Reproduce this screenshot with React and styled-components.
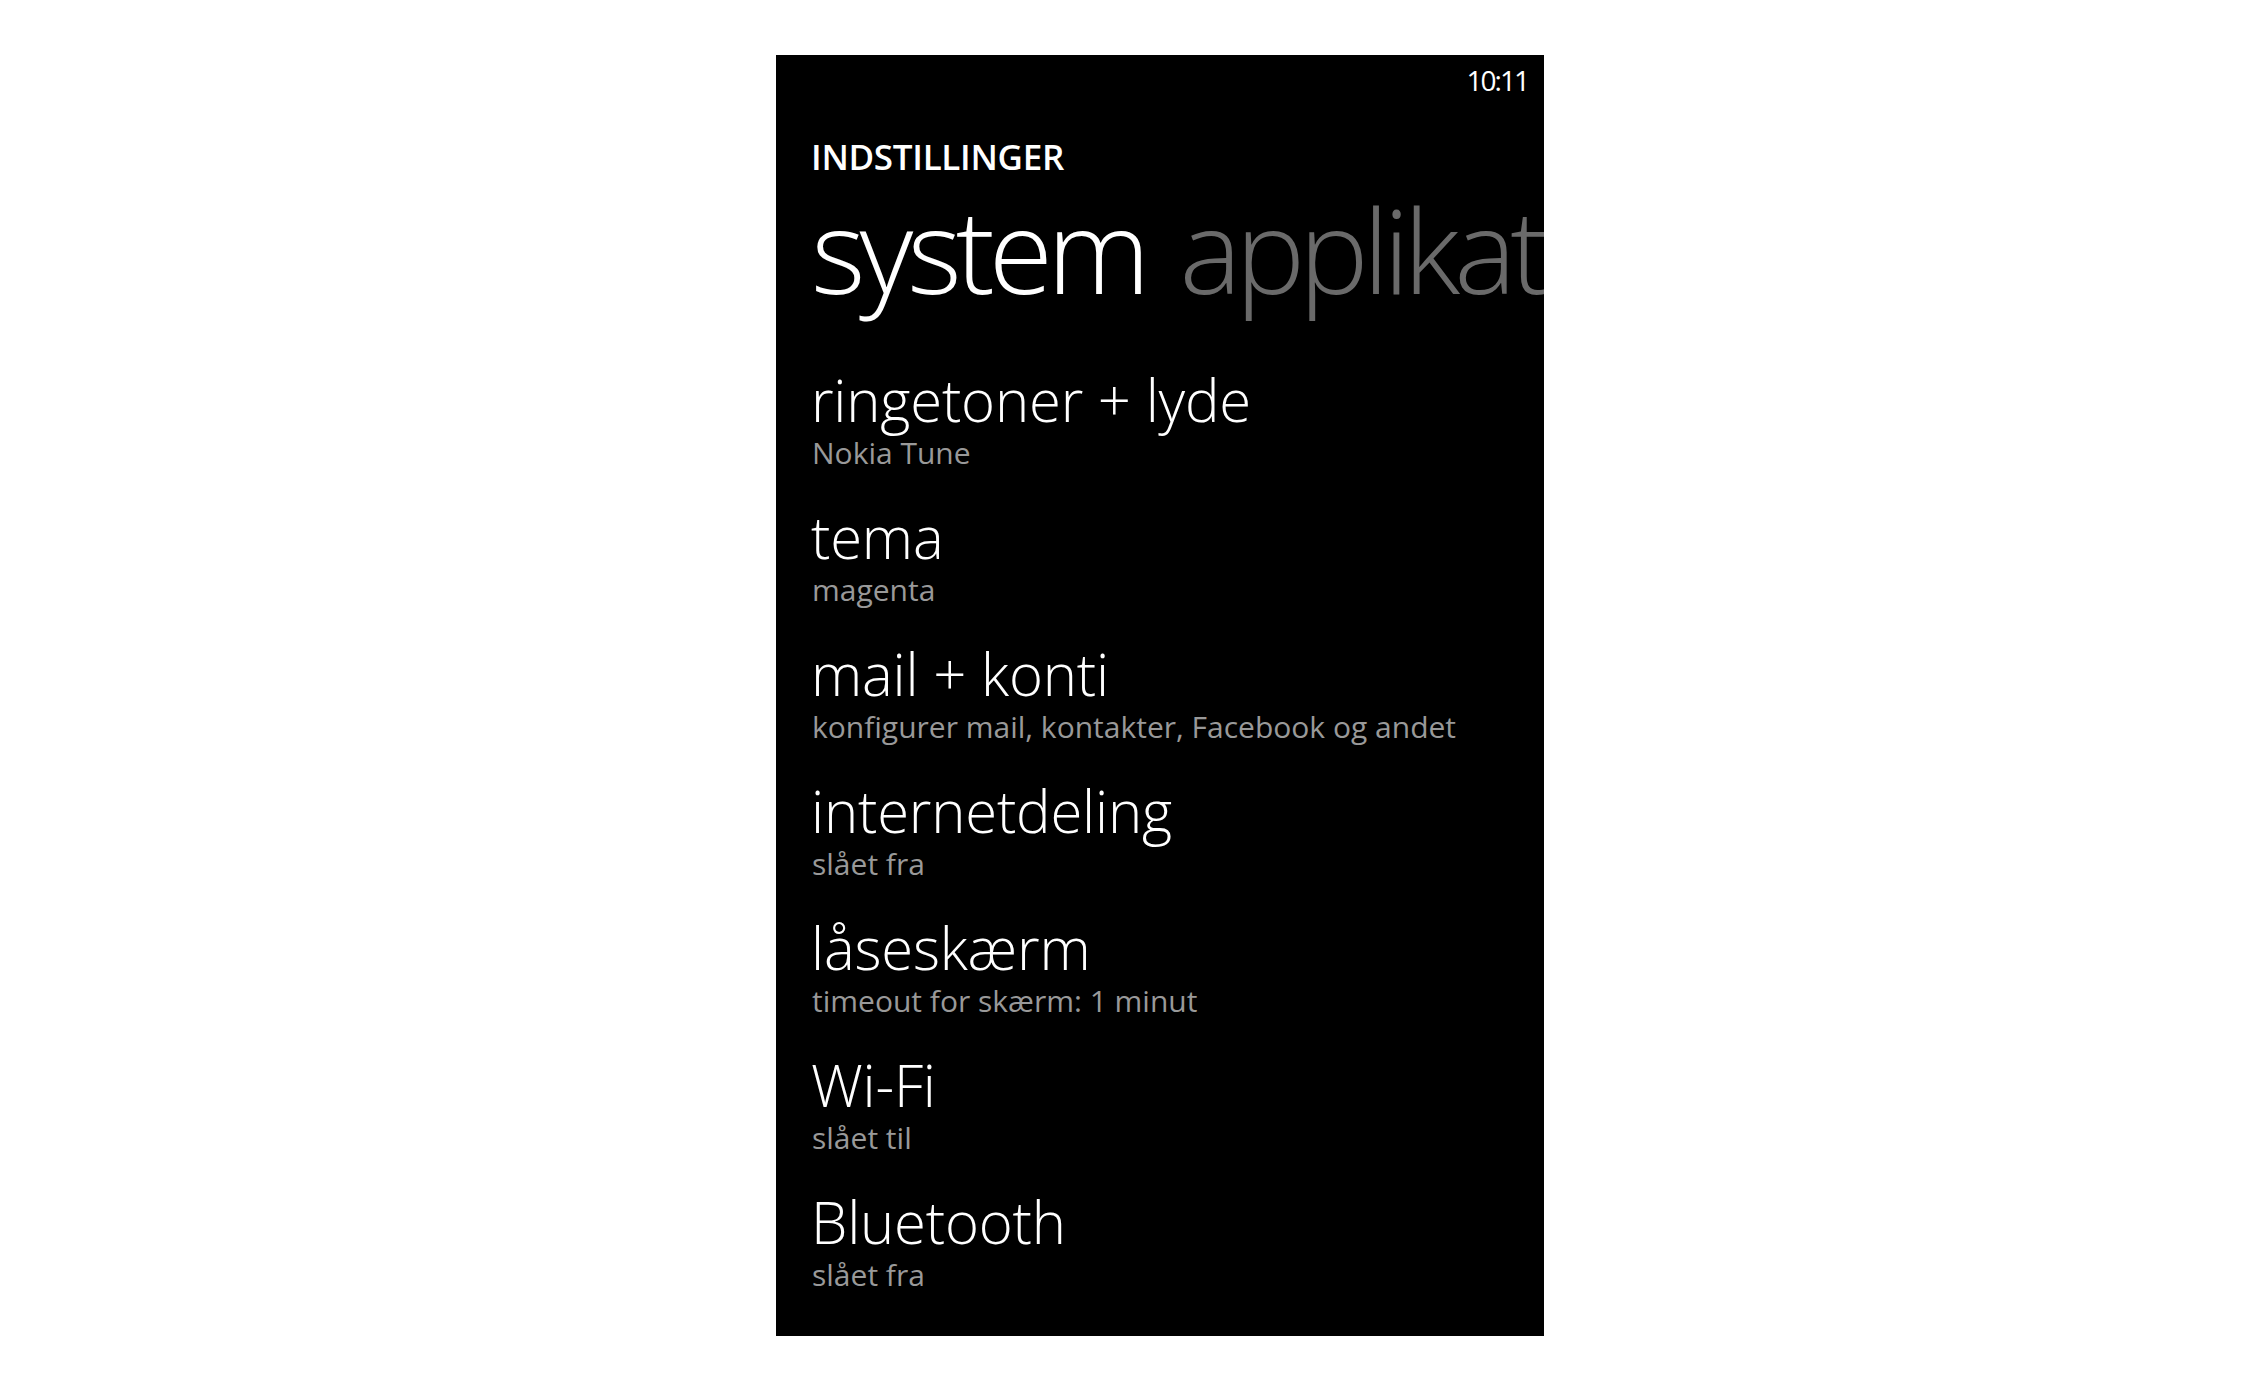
import React from "react";
import styled, { createGlobalStyle } from "styled-components";

const GlobalStyle = createGlobalStyle`
  html, body {
    margin: 0;
    padding: 0;
    background: #ffffff;
  }
  body {
    font-family: "Open Sans", "Noto Sans", sans-serif;
  }
`;

const Page = styled.div`
  min-height: 1386px;
  padding: 55px 0 0 776px;
  box-sizing: border-box;
`;

const Phone = styled.div`
  width: 768px;
  height: 1281px;
  background: #000;
  color: #fff;
  overflow: hidden;
  display: flex;
  flex-direction: column;
`;

const StatusBar = styled.div`
  display: flex;
  justify-content: flex-end;
  padding: 5px 16px 0 0;
  font-size: 28px;
  line-height: 40px;
  letter-spacing: -2px;
`;

const AppTitle = styled.div`
  margin: 35px 0 0 35px;
  font-size: 35px;
  line-height: 44px;
  font-weight: 600;
  letter-spacing: -0.3px;
`;

const PivotRow = styled.div`
  display: flex;
  white-space: nowrap;
  padding-left: 35px;
  font-size: 117px;
  line-height: 140px;
  font-weight: 300;
  letter-spacing: -6px;
`;

const PivotHeader = styled.span`
  color: ${(p) => (p.active ? "#ffffff" : "#6a6a6a")};
  margin-right: 35px;
`;

const List = styled.div`
  display: flex;
  flex-direction: column;
  gap: 31px;
  margin-top: 47px;
  padding-left: 35px;
`;

const Item = styled.div`
  display: flex;
  flex-direction: column;
`;

const ItemTitle = styled.div`
  font-size: 58px;
  line-height: 68px;
  font-weight: 300;
  letter-spacing: -0.2px;
`;

const ItemSub = styled.div`
  font-size: 30px;
  line-height: 38px;
  color: #999999;
  padding-left: 1px;
`;

const items = [
  { title: "ringetoner + lyde", sub: "Nokia Tune" },
  { title: "tema", sub: "magenta" },
  { title: "mail + konti", sub: "konfigurer mail, kontakter, Facebook og andet" },
  { title: "internetdeling", sub: "slået fra" },
  { title: "låseskærm", sub: "timeout for skærm: 1 minut" },
  { title: "Wi-Fi", sub: "slået til" },
  { title: "Bluetooth", sub: "slået fra" },
];

export default function App() {
  return (
    <>
      <GlobalStyle />
      <Page>
        <Phone>
          <StatusBar>10:11</StatusBar>
          <AppTitle>INDSTILLINGER</AppTitle>
          <PivotRow>
            <PivotHeader active>system</PivotHeader>
            <PivotHeader>applikationer</PivotHeader>
          </PivotRow>
          <List>
            {items.map((it) => (
              <Item key={it.title}>
                <ItemTitle>{it.title}</ItemTitle>
                <ItemSub>{it.sub}</ItemSub>
              </Item>
            ))}
          </List>
        </Phone>
      </Page>
    </>
  );
}
